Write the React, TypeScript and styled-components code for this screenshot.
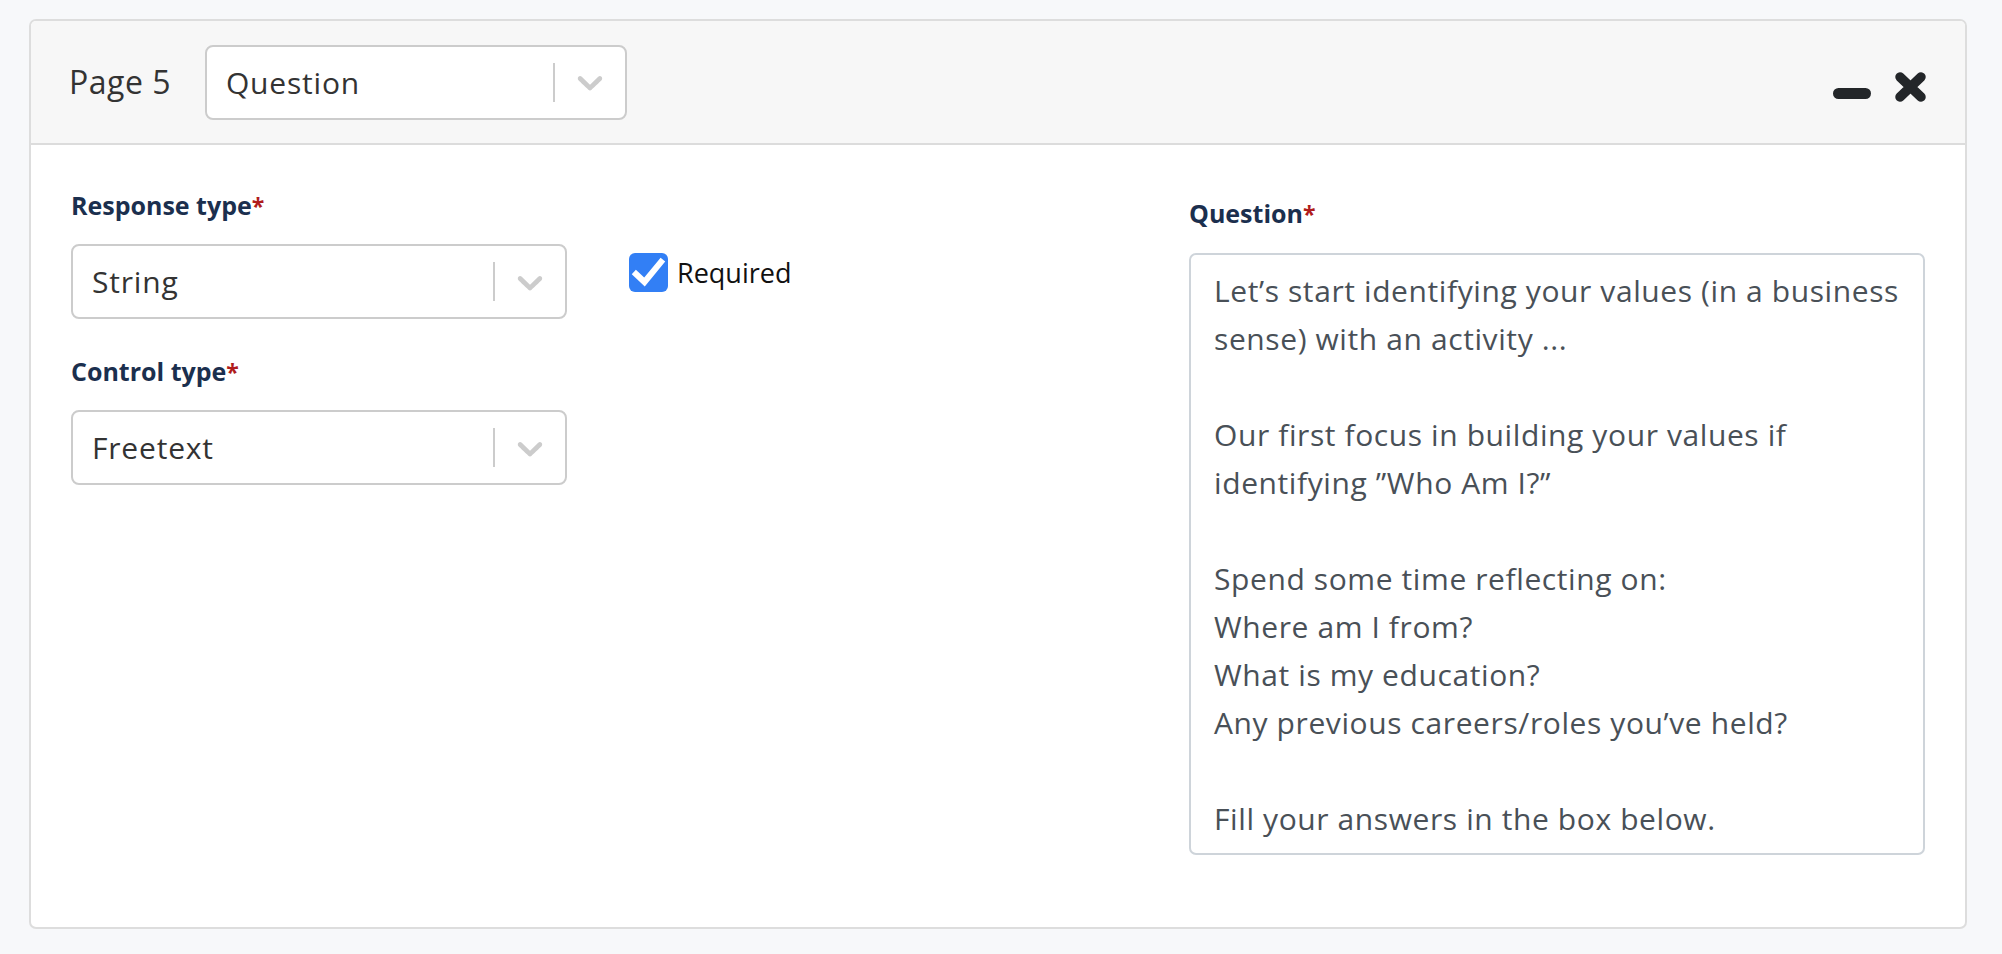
import React from 'react';
import styled, { createGlobalStyle } from 'styled-components';

const FONT = '"Open Sans", Lato, "Noto Sans", sans-serif';

const GlobalStyle = createGlobalStyle`
  html, body { margin: 0; padding: 0; background: #f7f8fa; }
  body { font-family: ${FONT}; }
  *, *::before, *::after { box-sizing: border-box; }
`;

const Page = styled.div`
  min-height: 954px;
  padding: 19px 35px 25px 29px;
`;

const Card = styled.section`
  background: #ffffff;
  border: 2px solid #dddddd;
  border-radius: 7px;
  overflow: hidden;
`;

const Header = styled.header`
  display: flex;
  align-items: center;
  height: 124px;
  padding: 0 39px 0 38px;
  background: #f7f7f7;
  border-bottom: 2px solid #dcdcdc;
`;

const PageLabel = styled.span`
  font-size: 32px;
  letter-spacing: 0.5px;
  color: #333333;
  margin-right: 34px;
  line-height: 1.2;
`;

const Select = styled.div<{ $width: number }>`
  display: flex;
  align-items: stretch;
  width: ${(p) => p.$width}px;
  height: 75px;
  flex: none;
  background: #ffffff;
  border: 2px solid #cccccc;
  border-radius: 8px;
`;

const SelectValue = styled.div`
  flex: 1;
  display: flex;
  align-items: center;
  padding-left: 19px;
  font-size: 30px;
  letter-spacing: 0.8px;
  color: #333333;
`;

const Separator = styled.span`
  width: 2px;
  margin: 16px 0;
  background: #cccccc;
`;

const Indicator = styled.div`
  width: 70px;
  display: flex;
  align-items: center;
  justify-content: center;
`;

const Spacer = styled.div`
  flex: 1;
`;

const IconGroup = styled.div`
  display: flex;
  align-items: flex-start;
  gap: 24px;
  height: 30px;
  margin-top: 10px;
`;

const IconButton = styled.button<{ $offset?: number }>`
  display: block;
  padding: 0;
  border: 0;
  background: none;
  margin-top: ${(p) => p.$offset ?? 0}px;
  cursor: pointer;
  line-height: 0;
`;

const Body = styled.div`
  display: flex;
  align-items: flex-start;
  padding: 45px 40px 72px 40px;
`;

const LeftCol = styled.div`
  width: 496px;
  flex: none;
  display: flex;
  flex-direction: column;
`;

const FieldLabel = styled.label<{ $gapTop?: number; $gapBottom?: number }>`
  display: block;
  height: 31px;
  font-size: 25px;
  font-weight: 700;
  line-height: 31px;
  color: #1b2f4e;
  margin-top: ${(p) => p.$gapTop ?? 0}px;
  margin-bottom: ${(p) => p.$gapBottom ?? 23}px;
`;

const Star = styled.span`
  color: #b01c1c;
  font-size: 23px;
  line-height: 0;
`;

const CheckRow = styled.label`
  display: flex;
  align-items: center;
  margin-left: 62px;
  margin-top: 63px;
  cursor: pointer;
`;

const CheckBox = styled.span`
  width: 39px;
  height: 39px;
  border-radius: 6px;
  background: #327ff5;
  display: flex;
  align-items: center;
  justify-content: center;
  flex: none;
`;

const CheckText = styled.span`
  font-size: 27px;
  color: #111111;
  margin-left: 9px;
`;

const RightCol = styled.div`
  margin-left: auto;
  width: 736px;
  flex: none;
  padding-top: 8px;
`;

const QuestionArea = styled.textarea`
  display: block;
  width: 100%;
  height: 602px;
  margin: 0;
  padding: 12px 23px;
  border: 2px solid #ced4da;
  border-radius: 7px;
  font-family: ${FONT};
  font-size: 30px;
  letter-spacing: 0.6px;
  line-height: 48px;
  color: #495057;
  background: #ffffff;
  resize: none;
  overflow: hidden;
  white-space: pre;
  outline: none;
`;

const Chevron = () => (
  <svg width="42" height="42" viewBox="0 0 20 20" fill="#cccccc" aria-hidden="true">
    <path d="M4.516 7.548c0.436-0.446 1.043-0.481 1.576 0l3.908 3.747 3.908-3.747c0.533-0.481 1.141-0.446 1.574 0 0.436 0.445 0.408 1.197 0 1.615-0.406 0.418-4.695 4.502-4.695 4.502-0.217 0.223-0.502 0.335-0.787 0.335s-0.57-0.112-0.789-0.335c0 0-4.287-4.084-4.695-4.502s-0.436-1.170 0-1.615z" />
  </svg>
);

const Dropdown = ({ value, width }: { value: string; width: number }) => (
  <Select $width={width}>
    <SelectValue>{value}</SelectValue>
    <Separator />
    <Indicator>
      <Chevron />
    </Indicator>
  </Select>
);

const questionText = [
  'Let’s start identifying your values (in a business',
  'sense) with an activity ...',
  '',
  'Our first focus in building your values if',
  'identifying ”Who Am I?”',
  '',
  'Spend some time reflecting on:',
  'Where am I from?',
  'What is my education?',
  'Any previous careers/roles you’ve held?',
  '',
  'Fill your answers in the box below.',
].join('\n');

export default function App() {
  return (
    <>
      <GlobalStyle />
      <Page>
        <Card>
          <Header>
            <PageLabel>Page 5</PageLabel>
            <Dropdown value="Question" width={422} />
            <Spacer />
            <IconGroup>
              <IconButton $offset={16} aria-label="Minimize">
                <svg width="38" height="11" viewBox="0 0 38 11">
                  <rect x="0" y="0" width="38" height="11" rx="5.5" fill="#232629" />
                </svg>
              </IconButton>
              <IconButton aria-label="Close">
                <svg width="31" height="30" viewBox="0 0 31 30">
                  <path d="M5 5 L26 25 M26 5 L5 25" stroke="#232629" strokeWidth="9.5" strokeLinecap="round" fill="none" />
                </svg>
              </IconButton>
            </IconGroup>
          </Header>
          <Body>
            <LeftCol>
              <FieldLabel>
                Response type<Star>*</Star>
              </FieldLabel>
              <Dropdown value="String" width={496} />
              <FieldLabel $gapTop={37} $gapBottom={23}>
                Control type<Star>*</Star>
              </FieldLabel>
              <Dropdown value="Freetext" width={496} />
            </LeftCol>
            <CheckRow>
              <CheckBox>
                <svg width="39" height="39" viewBox="0 0 39 39">
                  <polyline points="7,21 15.5,29 32,9" stroke="#ffffff" strokeWidth="6" fill="none" strokeLinejoin="miter" strokeLinecap="square" />
                </svg>
              </CheckBox>
              <CheckText>Required</CheckText>
            </CheckRow>
            <RightCol>
              <FieldLabel $gapBottom={24}>
                Question<Star>*</Star>
              </FieldLabel>
              <QuestionArea readOnly wrap="off" value={questionText} />
            </RightCol>
          </Body>
        </Card>
      </Page>
    </>
  );
}
